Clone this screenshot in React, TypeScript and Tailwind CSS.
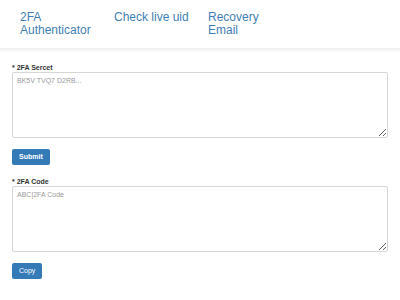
import React from "react";

export default function App() {
  const font = { fontFamily: '"Liberation Sans", Arial, sans-serif' };
  return (
    <div className="w-[400px] h-[300px] bg-white overflow-hidden" style={font}>
      <nav className="flex pl-[20px] pt-[11px] h-[48px]">
        <a className="w-[94px] pr-[14px] text-[12px] leading-[13px] text-[#3f7fb4]">2FA Authenticator</a>
        <a className="w-[94px] pr-[14px] text-[12px] leading-[13px] text-[#3f7fb4]">Check live uid</a>
        <a className="w-[94px] pr-[14px] text-[12px] leading-[13px] text-[#3f7fb4]">Recovery Email</a>
      </nav>
      <div className="h-[4px] bg-gradient-to-b from-[#f0f0f0] to-[#fbfbfb]" />
      <div className="px-[12px] pt-[11px] flex flex-col">
        <label className="text-[7px] leading-[9px] font-bold text-[#333]">* 2FA Sercet</label>
        <textarea
          placeholder="BK5V TVQ7 D2RB..."
          className="h-[66px] w-[376px] border border-[#d6d6d6] rounded-[2px] px-[4px] py-[3px] text-[7px] leading-[10px] placeholder:text-[#9a9a9a] outline-none"
        />
        <div className="mt-[11px] flex">
          <button className="h-[16px] px-[7px] bg-[#337ab7] rounded-[2px] text-white text-[7px] font-bold leading-[16px]">Submit</button>
        </div>
        <label className="mt-[12px] text-[7px] leading-[9px] font-bold text-[#333]">* 2FA Code</label>
        <textarea
          placeholder="ABC|2FA Code"
          className="h-[66px] w-[376px] border border-[#d6d6d6] rounded-[2px] px-[4px] py-[3px] text-[7px] leading-[10px] placeholder:text-[#9a9a9a] outline-none"
        />
        <div className="mt-[11px] flex">
          <button className="h-[16px] px-[7px] bg-[#337ab7] rounded-[2px] text-white text-[7px] leading-[16px]">Copy</button>
        </div>
      </div>
    </div>
  );
}
